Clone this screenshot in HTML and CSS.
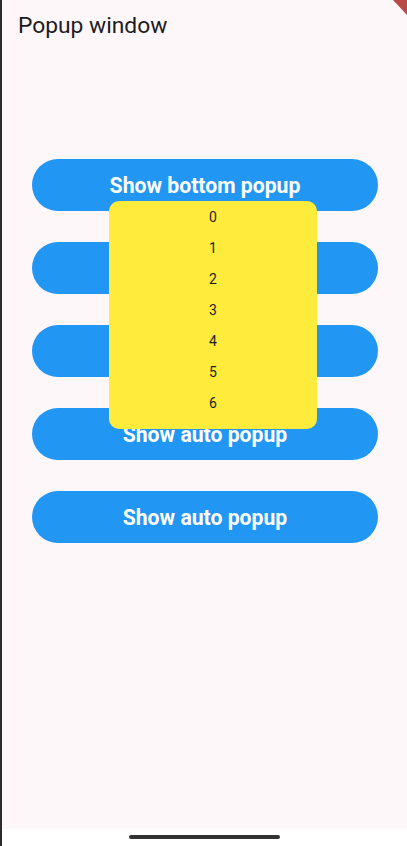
FILE: index.html
```html
<!DOCTYPE html>
<html>
<head>
<meta charset="utf-8">
<link rel="stylesheet" href="styles.css">
</head>
<body>
<div class="screen">
  <div class="app">
    <header class="appbar"><h1 class="title">Popup window</h1></header>
    <main class="buttons">
      <button class="btn">Show bottom popup</button>
      <button class="btn"></button>
      <button class="btn"></button>
      <button class="btn">Show auto popup</button>
      <button class="btn">Show auto popup</button>
    </main>
    <div class="popup">
      <div class="item">0</div>
      <div class="item">1</div>
      <div class="item">2</div>
      <div class="item">3</div>
      <div class="item">4</div>
      <div class="item">5</div>
      <div class="item">6</div>
    </div>
    <svg class="banner" width="14" height="15" viewBox="0 0 14 15"><polygon points="0,0 14,0 14,15" fill="#b94a48"/></svg>
  </div>
  <div class="navbar"><div class="handle"></div></div>
</div>
</body>
</html>
```

FILE: styles.css
```css
html, body {
  margin: 0;
  padding: 0;
  background: #ffffff;
}
.screen {
  width: 407px;
  height: 846px;
  display: flex;
  flex-direction: column;
  border-left: 2px solid #2b2b2b;
  box-sizing: border-box;
  font-family: Roboto, "Noto Sans", sans-serif;
}
.app {
  position: relative;
  flex: 0 0 829px;
  background: #fef7fa;
  overflow: hidden;
}
.appbar {
  height: 50px;
  display: flex;
  align-items: center;
  padding-left: 16px;
}
.title {
  margin: 0;
  font-size: 22.8px;
  font-weight: 400;
  color: #1d1b20;
}
.buttons {
  display: flex;
  flex-direction: column;
  gap: 31px;
  padding: 109px 29px 0 30px;
}
.btn {
  height: 52px;
  border: none;
  border-radius: 26px;
  background: #2196f3;
  color: #ffffff;
  font-family: Roboto, sans-serif;
  font-weight: 700;
  font-size: 21.2px;
  padding: 0;
}
.popup {
  position: absolute;
  left: 107px;
  top: 201px;
  width: 208px;
  height: 228px;
  background: #ffeb3b;
  border-radius: 10px;
  box-sizing: border-box;
  padding-bottom: 10px;
  display: grid;
  grid-template-rows: repeat(7, 1fr);
}
.item {
  display: flex;
  align-items: center;
  justify-content: center;
  font-size: 14px;
  color: #1d1b20;
}
.banner {
  position: absolute;
  top: 0;
  right: 0;
}
.navbar {
  flex: 1;
  background: #ffffff;
  display: flex;
  justify-content: center;
  padding-top: 6px;
}
.handle {
  width: 151px;
  height: 4px;
  border-radius: 2px;
  background: #333333;
}
```
